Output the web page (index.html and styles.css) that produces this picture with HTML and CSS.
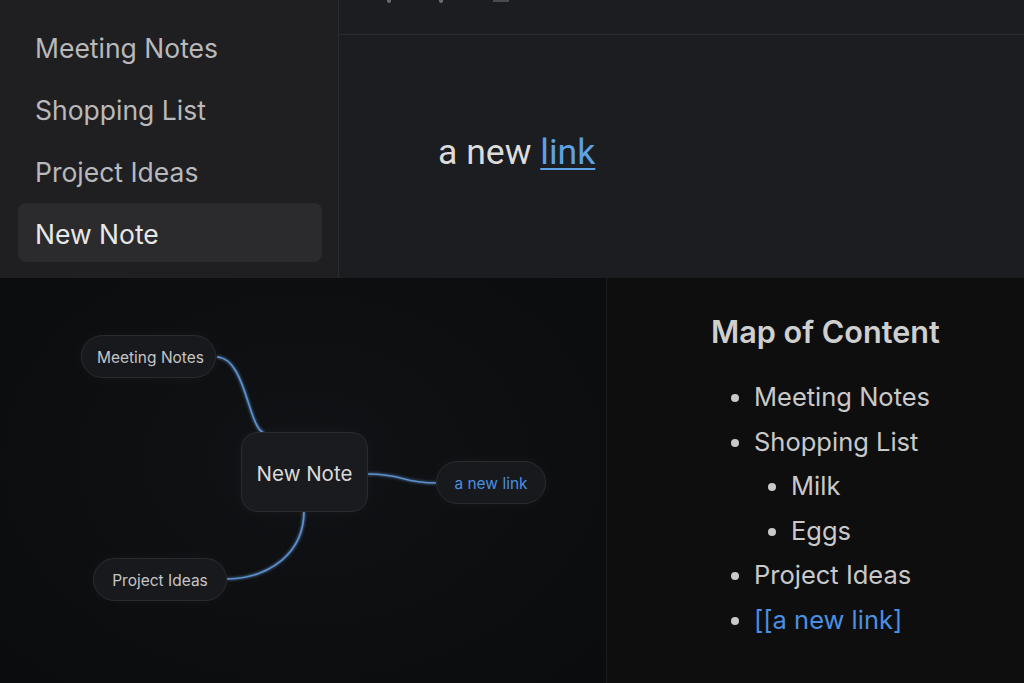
FILE: index.html
```html
<!DOCTYPE html>
<html>
<head>
<meta charset="utf-8">
<link rel="stylesheet" href="styles.css">
</head>
<body>
<div class="app">
  <div class="top">
    <nav class="sidebar">
      <div class="item">Meeting Notes</div>
      <div class="item">Shopping List</div>
      <div class="item">Project Ideas</div>
      <div class="item active">New Note</div>
    </nav>
    <main class="editor">
      <div class="editor-head">
        <span class="mark m1"></span><span class="mark m2"></span><span class="bar"></span>
      </div>
      <div class="editor-body">
        <p class="line">a new <a class="link">link</a></p>
      </div>
    </main>
  </div>
  <div class="bottom">
    <section class="graph">
      <svg class="edges" width="606" height="405" viewBox="0 0 606 405">
        <defs>
          <filter id="glow" x="-20%" y="-20%" width="140%" height="140%">
            <feGaussianBlur stdDeviation="1.6" result="b"/>
            <feMerge><feMergeNode in="b"/><feMergeNode in="SourceGraphic"/></feMerge>
          </filter>
        </defs>
        <g fill="none" stroke="#5b8fcb" stroke-width="1.7" filter="url(#glow)">
          <path d="M217 79 C246 80 248 150 264 155"/>
          <path d="M368 196 C405 196 400 205 436 205"/>
          <path d="M304 233 C304 275 270 300 227 301"/>
        </g>
      </svg>
      <div class="node n-meet">Meeting Notes</div>
      <div class="node n-main">New Note</div>
      <div class="node n-link">a new link</div>
      <div class="node n-proj">Project Ideas</div>
    </section>
    <section class="moc">
      <h2 class="moc-title">Map of Content</h2>
      <ul class="moc-list">
        <li>Meeting Notes</li>
        <li>Shopping List
          <ul class="sub">
            <li>Milk</li>
            <li>Eggs</li>
          </ul>
        </li>
        <li>Project Ideas</li>
        <li class="wikilink">[[a new link]</li>
      </ul>
    </section>
  </div>
</div>
</body>
</html>
```

FILE: styles.css
```css
html, body {
  margin: 0;
  padding: 0;
  width: 1024px;
  height: 683px;
  overflow: hidden;
  background: #0e0e0f;
  font-family: "Inter", "Noto Sans", sans-serif;
}

.app {
  display: flex;
  flex-direction: column;
  width: 1024px;
  height: 683px;
}

.top {
  display: flex;
  height: 278px;
}

.sidebar {
  width: 339px;
  box-sizing: border-box;
  background: #1f1f22;
  border-right: 1px solid #2a2b2f;
  padding: 17px 16px 0 18px;
  display: flex;
  flex-direction: column;
  gap: 3px;
}

.item {
  height: 59px;
  line-height: 63px;
  padding-left: 17px;
  font-size: 26.5px;
  color: #b9b9bb;
  border-radius: 8px;
}

.item.active {
  background: #2b2b2e;
  color: #e8e8e8;
}

.editor {
  flex: 1;
  background: #1c1d20;
  display: flex;
  flex-direction: column;
}

.editor-head {
  height: 34px;
  border-bottom: 1px solid #2b2c30;
  position: relative;
}

.mark {
  position: absolute;
  top: 0;
  width: 4px;
  height: 3px;
  border-radius: 0 0 2px 2px;
  background: #6a6b70;
}
.m1 { left: 48px; }
.m2 { left: 100px; }
.bar {
  position: absolute;
  top: 0;
  left: 154px;
  width: 16px;
  height: 2px;
  background: #4a4b50;
}

.editor-body {
  padding: 97px 0 0 99px;
}

.line {
  margin: 0;
  font-family: "Roboto", "Inter", sans-serif;
  font-size: 35.6px;
  line-height: 40px;
  color: #dcdcdc;
}

.link {
  color: #5ea2e3;
  text-decoration: underline;
  text-decoration-thickness: 2px;
  text-underline-offset: 4px;
}

.bottom {
  display: flex;
  height: 405px;
}

.graph {
  width: 606px;
  flex: none;
  position: relative;
  background: radial-gradient(ellipse at 50% 45%, #111215 0%, #0d0e10 60%, #0b0c0e 100%);
  border-right: 1px solid #1b1c21;
}

.edges {
  position: absolute;
  left: 0;
  top: 0;
}

.node {
  position: absolute;
  box-sizing: border-box;
  display: flex;
  align-items: center;
  justify-content: center;
  padding-top: 2px;
  background: #18191c;
  border: 1px solid #2a2b30;
  color: #c6c6c8;
  font-size: 15.5px;
  box-shadow: 0 0 14px rgba(255, 255, 255, 0.04);
}

.n-meet {
  left: 81px; top: 57px; width: 135px; height: 43px;
  border-radius: 22px;
  padding-left: 4px;
}

.n-main {
  left: 241px; top: 154px; width: 127px; height: 80px;
  border-radius: 16px;
  font-size: 20.5px;
  color: #dadada;
  background: #1a1b1e;
}

.n-link {
  left: 436px; top: 183px; width: 110px; height: 43px;
  border-radius: 22px;
  color: #4b8fe0;
}

.n-proj {
  left: 93px; top: 280px; width: 134px; height: 43px;
  border-radius: 22px;
}

.moc {
  flex: 1;
  background: #0e0e0f;
  padding: 36px 0 0 104px;
}

.moc-title {
  margin: 0 0 25px 0;
  font-size: 30.6px;
  font-weight: 600;
  line-height: 36px;
  color: #cfcfd0;
}

.moc-list {
  margin: 0;
  padding-left: 43px;
  font-size: 25.5px;
  line-height: 44.5px;
  color: #c9c9ca;
}

.moc-list li::marker {
  color: #c9c9ca;
}

.moc-list .sub {
  margin: 0;
  padding-left: 37px;
  list-style: disc;
}

.wikilink {
  color: #4a8fe0;
}
```
